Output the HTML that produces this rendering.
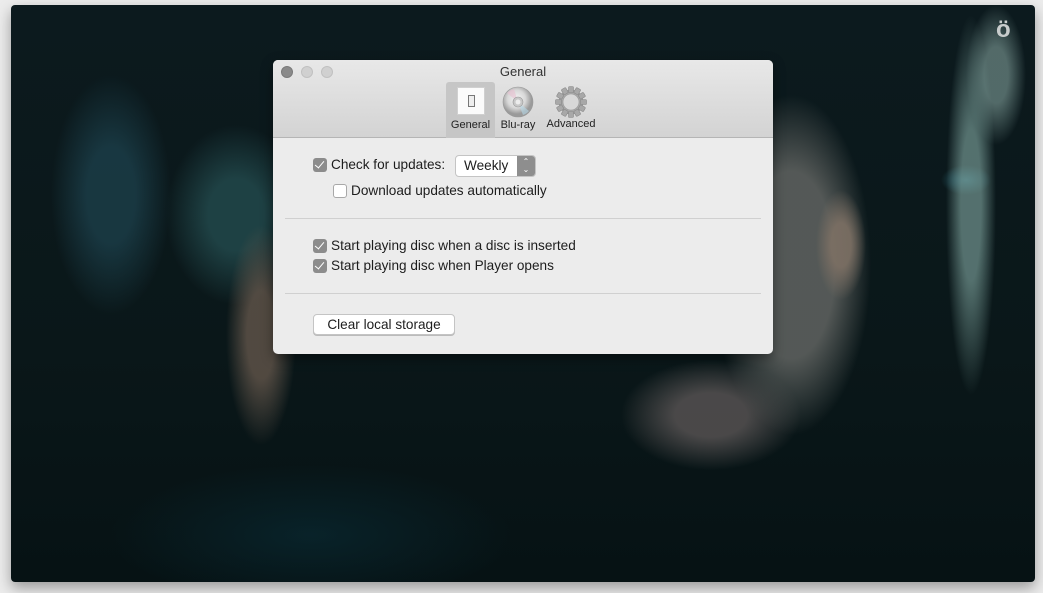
<!DOCTYPE html>
<html><head><meta charset="utf-8"><style>
*{margin:0;padding:0;box-sizing:border-box}
body{width:1043px;height:593px;background:#ececec;position:relative;overflow:hidden;font-family:"Liberation Sans",sans-serif}
#win{position:absolute;left:11px;top:5px;width:1024px;height:577px;border-radius:4px;overflow:hidden;box-shadow:0 6px 14px rgba(0,0,0,.35);
background:
radial-gradient(ellipse 25px 55px at 830px 240px,rgba(125,112,100,.9) 40%,transparent),
radial-gradient(ellipse 80px 170px at 780px 260px,rgba(88,92,90,.95) 55%,transparent),
radial-gradient(ellipse 90px 55px at 700px 410px,rgba(90,85,85,.8) 40%,transparent),
radial-gradient(ellipse 25px 190px at 960px 200px,rgba(115,150,145,.7) 40%,transparent),
radial-gradient(ellipse 30px 70px at 985px 70px,rgba(130,160,155,.6) 40%,transparent),
radial-gradient(ellipse 25px 15px at 955px 175px,rgba(60,140,160,.7),transparent),
radial-gradient(ellipse 35px 110px at 250px 330px,rgba(105,90,78,.75) 40%,transparent),
radial-gradient(ellipse 70px 90px at 225px 210px,rgba(35,75,78,.8) 40%,transparent),
radial-gradient(ellipse 60px 120px at 100px 190px,rgba(35,80,95,.55) 40%,transparent),
radial-gradient(ellipse 200px 70px at 300px 530px,rgba(10,45,55,.6),transparent),
linear-gradient(180deg,#0c1a1e 0%,#0a1719 60%,#061214 100%);}
.logo{position:absolute;left:985px;top:12px;color:#c8cccc;font-weight:bold;font-size:24px;line-height:26px}
#dlg{position:absolute;left:273px;top:60px;width:500px;height:294px;background:#ececec;border-radius:5px;overflow:hidden;box-shadow:0 4px 12px rgba(0,0,0,.4)}
#tb{height:78px;background:linear-gradient(#e8e8e8,#d3d3d3);border-bottom:1px solid #b5b5b5;position:relative}
.tl{position:absolute;top:6px;width:12px;height:12px;border-radius:50%;background:#d0d0d0;border:1px solid #c0c0c0}
.title{position:absolute;top:4px;width:100%;text-align:center;font-size:13px;color:#333}
.tab{position:absolute;top:22px;height:56px;font-size:11px;color:#222;text-align:center}
.txt{position:absolute;font-size:13.6px;color:#1d1d1d;white-space:nowrap}
.cb{position:absolute;width:14px;height:14px;border-radius:3px}
.cb.on{background:#8c8c8c}
.cb.on:after{content:"";position:absolute;left:4px;top:1px;width:4px;height:8px;border:solid #fff;border-width:0 1.5px 1.5px 0;transform:rotate(40deg)}
.cb.off{background:#fff;border:1px solid #a8a8a8}
.sep{position:absolute;left:12px;width:476px;height:1px;background:#d0d0d0}
</style></head><body>
<div id="win"><div class="logo">ö</div></div>
<div id="dlg">
 <div id="tb">
  <div class="tl" style="left:8px;background:#8a8a8a;border-color:#7a7a7a"></div>
  <div class="tl" style="left:28px"></div>
  <div class="tl" style="left:48px"></div>
  <div class="title">General</div>
  <div class="tab" style="left:173px;width:49px;background:#c6c6c6;border-radius:3px 3px 0 0">
   <div style="margin:5px auto 0;width:28px;height:28px;background:#fbfbfb;border:1px solid #d0d0d0;position:relative"><div style="position:absolute;left:10px;top:7px;width:7px;height:12px;border:1px solid #777;background:#eee"></div></div>
   <div style="margin-top:4px">General</div>
  </div>
  <div class="tab" style="left:222px;width:46px">
   <svg width="32" height="32" viewBox="0 0 32 32" style="margin-top:4px"><defs><radialGradient id="d" cx="45%" cy="40%"><stop offset="0" stop-color="#f4f4f4"/><stop offset=".6" stop-color="#d8d8d8"/><stop offset="1" stop-color="#9a9a9a"/></radialGradient></defs><circle cx="16" cy="16" r="15" fill="url(#d)" stroke="#999" stroke-width=".6"/><path d="M16 16 L5 7 A14 14 0 0 1 12 3Z" fill="#e8c0d0" opacity=".6"/><path d="M16 16 L27 25 A14 14 0 0 1 21 29Z" fill="#b8d8e8" opacity=".6"/><circle cx="16" cy="16" r="5" fill="#c8c8c8" stroke="#999" stroke-width=".6"/><circle cx="16" cy="16" r="2.5" fill="#ececec"/></svg>
   <div style="margin-top:-2px">Blu-ray</div>
  </div>
  <div class="tab" style="left:268px;width:60px">
   <svg width="34" height="34" viewBox="0 0 34 34" style="margin-top:3px"><g fill="#a8a8a8" stroke="#8a8a8a" stroke-width=".6"><circle cx="17" cy="17" r="12"/><g id="t"><rect x="14.5" y="1.5" width="5" height="6" rx="1"/></g><use href="#t" transform="rotate(30 17 17)"/><use href="#t" transform="rotate(60 17 17)"/><use href="#t" transform="rotate(90 17 17)"/><use href="#t" transform="rotate(120 17 17)"/><use href="#t" transform="rotate(150 17 17)"/><use href="#t" transform="rotate(180 17 17)"/><use href="#t" transform="rotate(210 17 17)"/><use href="#t" transform="rotate(240 17 17)"/><use href="#t" transform="rotate(270 17 17)"/><use href="#t" transform="rotate(300 17 17)"/><use href="#t" transform="rotate(330 17 17)"/></g><circle cx="17" cy="17" r="8" fill="#d8d8d8" stroke="#999" stroke-width=".6"/></svg>
   <div style="margin-top:-4px">Advanced</div>
  </div>
 </div>
 <div class="cb on" style="left:40px;top:98px"></div>
 <div class="txt" style="left:58px;top:97px">Check for updates:</div>
 <div style="position:absolute;left:182px;top:95px;width:81px;height:22px;background:#fff;border:1px solid #c4c4c4;border-radius:4px;overflow:hidden">
  <div class="txt" style="left:8px;top:2px">Weekly</div>
  <div style="position:absolute;right:0;top:0;width:18px;height:21px;background:#8e8e8e;color:#fff;font-size:8px;line-height:8px;text-align:center;padding-top:2px">⌃<br>⌄</div>
 </div>
 <div class="cb off" style="left:60px;top:124px"></div>
 <div class="txt" style="left:78px;top:123px">Download updates automatically</div>
 <div class="sep" style="top:158px"></div>
 <div class="cb on" style="left:40px;top:179px"></div>
 <div class="txt" style="left:58px;top:178px">Start playing disc when a disc is inserted</div>
 <div class="cb on" style="left:40px;top:199px"></div>
 <div class="txt" style="left:58px;top:198px">Start playing disc when Player opens</div>
 <div class="sep" style="top:233px"></div>
 <div style="position:absolute;left:40px;top:254px;width:142px;height:21px;background:#fff;border:1px solid #c4c4c4;border-radius:4px;box-shadow:0 1px 0 #bbb;text-align:center;font-size:13.6px;line-height:19px;color:#1d1d1d">Clear local storage</div>
</div>
</body></html>
